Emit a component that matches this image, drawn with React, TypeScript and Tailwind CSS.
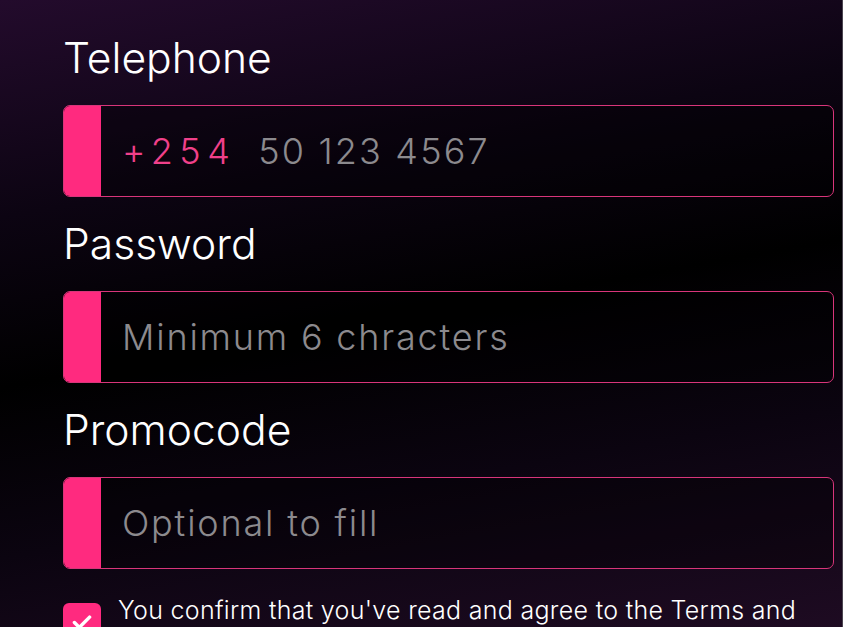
import React, { useState } from "react";

const Field = ({
  label,
  children,
}: {
  label: string;
  children: React.ReactNode;
}) => (
  <div className="flex flex-col gap-[23px]">
    <label className="text-[42.6px] leading-[48px] font-light text-white">{label}</label>
    <div className="flex h-[92px] rounded-[7px] border border-[#d8357a] bg-black/30 overflow-hidden">
      <div className="w-[37px] shrink-0 bg-[#ff2a7f]" />
      <div className="flex flex-1 items-center pl-[21px]">{children}</div>
    </div>
  </div>
);

export default function App() {
  const [phone, setPhone] = useState("");
  const [password, setPassword] = useState("");
  const [promo, setPromo] = useState("");
  const [agree, setAgree] = useState(true);

  return (
    <div
      className="h-screen overflow-hidden border-r border-[#4a4450] bg-[linear-gradient(170deg,#230b2c_0%,#0c0412_28%,#000_50%,#0b0410_72%,#1e0b22_100%)] pl-[63px] pr-[8px] pt-[34px]"
      style={{ fontFamily: "Inter, 'Noto Sans', sans-serif" }}
    >
      <form className="flex flex-col gap-[23px]" onSubmit={(e) => e.preventDefault()}>
        <Field label="Telephone">
          <span className="mr-[22px] text-[36px] font-light tracking-[0.18em] text-[#f0408a]">+254</span>
          <input
            type="tel"
            value={phone}
            onChange={(e) => setPhone(e.target.value)}
            placeholder="50 123 4567"
            className="w-full bg-transparent text-[36px] font-light tracking-[0.06em] text-white placeholder-[#8c8a8e] outline-none"
          />
        </Field>
        <Field label="Password">
          <input
            type="password"
            value={password}
            onChange={(e) => setPassword(e.target.value)}
            placeholder="Minimum 6 chracters"
            className="w-full bg-transparent text-[36px] font-light tracking-[0.05em] text-white placeholder-[#8c8a8e] outline-none"
          />
        </Field>
        <Field label="Promocode">
          <input
            type="text"
            value={promo}
            onChange={(e) => setPromo(e.target.value)}
            placeholder="Optional to fill"
            className="w-full bg-transparent text-[36px] font-light tracking-[0.05em] text-white placeholder-[#8c8a8e] outline-none"
          />
        </Field>
        <div className="mt-[11px] flex items-start gap-[17px]">
          <button
            type="button"
            onClick={() => setAgree(!agree)}
            className="flex h-[38px] w-[38px] shrink-0 items-center justify-center rounded-[6px] bg-[#ff2a7f]"
          >
            {agree && (
              <svg viewBox="0 0 24 24" className="h-[26px] w-[26px]" fill="none" stroke="white" strokeWidth={3.2} strokeLinecap="round" strokeLinejoin="round">
                <path d="M5 12.5l4.5 4.5L19 7.5" />
              </svg>
            )}
          </button>
          <p className="-mt-[8px] text-[25px] leading-[30px] font-light tracking-[0.012em] text-white">
            You confirm that you've read and agree to the Terms and Conditions and Privacy Policy
          </p>
        </div>
      </form>
    </div>
  );
}
